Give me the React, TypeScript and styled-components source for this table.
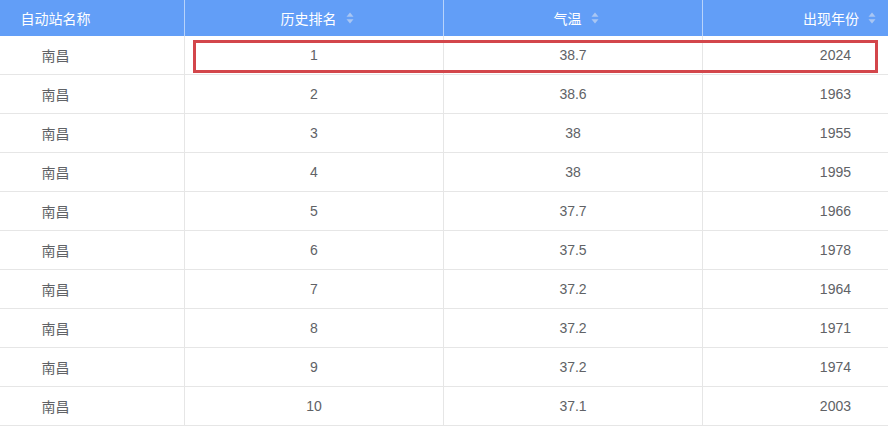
import React from 'react';
import styled, {createGlobalStyle} from 'styled-components';

const GlobalStyle = createGlobalStyle`
    body {
        margin: 0;
        background: #fff;
        font-family: "Liberation Sans", "Noto Sans CJK SC", sans-serif;
    }
`;

const COLS = '185px 259px 259px 185px';

const Table = styled.div`
    width: 888px;
    height: 426px;
    overflow: hidden;
`;

const HeaderRow = styled.div`
    display: grid;
    grid-template-columns: ${COLS};
    height: 36px;
    background: #629ef7;
`;

type Align = 'name' | 'center' | 'right';

const HeaderCell = styled.div<{$align: Align}>`
    display: flex;
    align-items: center;
    justify-content: ${(p) => (p.$align === 'right' ? 'flex-end' : 'center')};
    padding: ${(p) => (p.$align === 'name' ? '0 73px 0 0' : p.$align === 'right' ? '0 12px 0 0' : '0 0 0 6px')};
    color: #fff;
    font-size: 14px;
    border-right: 1px solid rgba(255, 255, 255, 0.55);
    &:nth-child(4) {
        border-right: none;
    }
`;

const SortIcon = styled.svg`
    margin-left: 9px;
    flex: none;
`;

const BodyRow = styled.div`
    position: relative;
    display: grid;
    grid-template-columns: ${COLS};
    height: 39px;
    border-bottom: 1px solid #e6e6e6;
    box-sizing: border-box;
`;

const Cell = styled.div<{$align: Align}>`
    display: flex;
    align-items: center;
    justify-content: ${(p) => (p.$align === 'right' ? 'flex-end' : 'center')};
    padding: ${(p) => (p.$align === 'name' ? '0 73px 0 0' : p.$align === 'right' ? '0 37px 0 0' : '0')};
    color: #606266;
    font-size: 14px;
    border-right: 1px solid #e6e6e6;
    &:nth-child(4) {
        border-right: none;
    }
`;

const Highlight = styled.div`
    position: absolute;
    left: 193px;
    top: 4px;
    width: 685px;
    height: 33px;
    border: 3px solid #d3464b;
    box-sizing: border-box;
    pointer-events: none;
`;

const rows = [
    ['南昌', '1', '38.7', '2024'],
    ['南昌', '2', '38.6', '1963'],
    ['南昌', '3', '38', '1955'],
    ['南昌', '4', '38', '1995'],
    ['南昌', '5', '37.7', '1966'],
    ['南昌', '6', '37.5', '1978'],
    ['南昌', '7', '37.2', '1964'],
    ['南昌', '8', '37.2', '1971'],
    ['南昌', '9', '37.2', '1974'],
    ['南昌', '10', '37.1', '2003'],
];

const aligns: Align[] = ['name', 'center', 'center', 'right'];

const Sort = () => (
    <SortIcon width='8' height='12' viewBox='0 0 8 12'>
        <path d='M4 0.5 L7.5 4.8 H0.5 Z' fill='#a9c6f3' />
        <path d='M4 11.5 L7.5 7.2 H0.5 Z' fill='#a9c6f3' />
    </SortIcon>
);

export default function App() {
    return (
        <>
            <GlobalStyle />
            <Table>
                <HeaderRow>
                    <HeaderCell $align='name'>自动站名称</HeaderCell>
                    <HeaderCell $align='center'>历史排名<Sort /></HeaderCell>
                    <HeaderCell $align='center'>气温<Sort /></HeaderCell>
                    <HeaderCell $align='right'>出现年份<Sort /></HeaderCell>
                </HeaderRow>
                {rows.map((r, i) => (
                    <BodyRow key={i}>
                        {r.map((v, j) => (
                            <Cell key={j} $align={aligns[j]}>{v}</Cell>
                        ))}
                        {i === 0 && <Highlight />}
                    </BodyRow>
                ))}
            </Table>
        </>
    );
}
